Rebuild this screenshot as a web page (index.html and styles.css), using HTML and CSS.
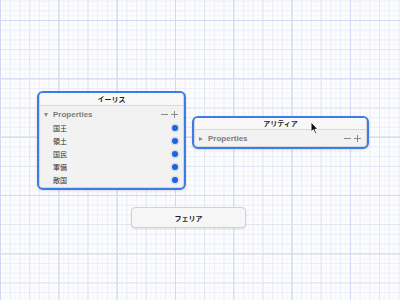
FILE: index.html
```html
<!DOCTYPE html>
<html>
	<head>
		<meta charset="utf-8">
		<title>ノード</title>
		<link rel="stylesheet" href="styles.css">
	</head>
	<body>
		<div class="canvas">
			<div class="node selected" id="ylisse">
				<div class="node-title">イーリス</div>
				<div class="node-body">
					<div class="group">
						<span class="caret open"></span>
						<span class="group-name">Properties</span>
						<span class="tools"><span class="minus"></span><span class="plus"></span></span>
					</div>
					<div class="prop"><span>国王</span><i class="dot"></i></div>
					<div class="prop"><span>領土</span><i class="dot"></i></div>
					<div class="prop"><span>国民</span><i class="dot"></i></div>
					<div class="prop"><span>軍備</span><i class="dot"></i></div>
					<div class="prop"><span>敵国</span><i class="dot"></i></div>
				</div>
			</div>

			<div class="node selected" id="altea">
				<div class="node-title">アリティア</div>
				<div class="node-body">
					<div class="group">
						<span class="caret"></span>
						<span class="group-name">Properties</span>
						<span class="tools"><span class="minus"></span><span class="plus"></span></span>
					</div>
				</div>
			</div>

			<div class="node plain" id="ferox">
				<div class="node-title">フェリア</div>
			</div>

			<svg class="cursor" width="9" height="14" viewBox="0 0 9 14">
				<path d="M1 1 L1 11 L3.4 8.8 L5 12.6 L6.6 11.9 L5 8.3 L8 8.3 Z" fill="#111" stroke="#fff" stroke-width="1" stroke-linejoin="round"/>
			</svg>
		</div>
	</body>
</html>
```

FILE: styles.css
```css
*{
	padding: 0;
	margin: 0;
	box-sizing: border-box;
}
html,body{
	width: 100%;
	height: 100%;
}
body{
	font-family: "Liberation Sans", "Noto Sans CJK JP", sans-serif;
	color: #222;
}
.canvas{
	position: relative;
	width: 400px;
	height: 300px;
	overflow: hidden;
	background-color: #fdfdfe;
	background-image:
		linear-gradient(to right, #d2d9f1 1px, transparent 1px),
		linear-gradient(to bottom, #d2d9f1 1px, transparent 1px),
		linear-gradient(to right, #e2e6f5 1px, transparent 1px),
		linear-gradient(to bottom, #e2e6f5 1px, transparent 1px),
		linear-gradient(to right, #ebeef9 1px, transparent 1px),
		linear-gradient(to bottom, #ebeef9 1px, transparent 1px),
		linear-gradient(to right, #f5f6fc 1px, transparent 1px),
		linear-gradient(to bottom, #f5f6fc 1px, transparent 1px);
	background-size:
		58.33px 58.33px,
		58.33px 58.33px,
		29.17px 29.17px,
		29.17px 29.17px,
		9.722px 9.722px,
		9.722px 9.722px,
		4.861px 4.861px,
		4.861px 4.861px;
	background-position: 0 20px;
}

/* nodes */
.node{
	position: absolute;
	display: flex;
	flex-direction: column;
	background: #f2f2f2;
	border-radius: 6px;
	overflow: hidden;
}
.node.selected{
	border: 2px solid #3a7ce8;
	box-shadow: inset 0 0 0 1px #d6d6d6, 0 1px 3px rgba(0,0,0,0.12);
}
.node.plain{
	border: 1px solid #d2d2d2;
	border-radius: 4px;
	background: #f6f6f6;
	box-shadow: 0 1px 2px rgba(0,0,0,0.12);
	justify-content: center;
}
#ylisse{
	left: 37px;
	top: 91px;
	width: 149px;
	height: 99px;
}
#altea{
	left: 192px;
	top: 116px;
	width: 177px;
	height: 33px;
}
#ferox{
	left: 131px;
	top: 207px;
	width: 115px;
	height: 21px;
}
.node-title{
	height: 13px;
	line-height: 12px;
	text-align: center;
	font-family: "Noto Sans CJK JP", sans-serif;
	font-size: 7px;
	font-weight: 700;
	color: #1e1e1e;
	background: #f8f8f8;
	border-bottom: 1px solid #d8d8d8;
}
.selected .node-title{
	margin: 0 1px;
}
#altea .node-title{
	height: 12px;
	line-height: 11px;
}
.plain .node-title{
	border: none;
	background: none;
	height: auto;
	line-height: 12px;
}
.node-body{
	padding: 2px 0;
}
.group, .prop{
	display: flex;
	align-items: center;
	height: 13px;
	padding: 0 6px 0 14px;
}
.group{
	position: relative;
}
.caret{
	position: absolute;
	left: 5px;
	top: 5px;
	width: 0;
	height: 0;
	border-left: 4px solid #8a8a8a;
	border-top: 2.5px solid transparent;
	border-bottom: 2.5px solid transparent;
}
.caret.open{
	left: 5px;
	top: 5px;
	border-top: 4px solid #8a8a8a;
	border-left: 2.5px solid transparent;
	border-right: 2.5px solid transparent;
	border-bottom: none;
}
.group-name{
	font-size: 8px;
	font-weight: 700;
	color: #7b7b7b;
	flex: 1;
}
.tools{
	display: flex;
	align-items: center;
	gap: 3px;
}
.minus, .plus{
	position: relative;
	width: 7px;
	height: 7px;
}
.minus::before, .plus::before, .plus::after{
	content: "";
	position: absolute;
	background: #8a8a8a;
}
.minus::before, .plus::before{
	left: 0;
	top: 3px;
	width: 7px;
	height: 1px;
}
.plus::after{
	left: 3px;
	top: 0;
	width: 1px;
	height: 7px;
}
.prop span{
	flex: 1;
	font-family: "Noto Sans CJK JP", sans-serif;
	font-size: 7px;
	color: #333;
}
.dot{
	display: block;
	width: 6px;
	height: 6px;
	margin-right: 0.5px;
	border-radius: 50%;
	background: #1b63e6;
	box-shadow: 0 0 0 1.5px #dcdcdc;
}
.cursor{
	position: absolute;
	left: 310px;
	top: 121px;
}
```
